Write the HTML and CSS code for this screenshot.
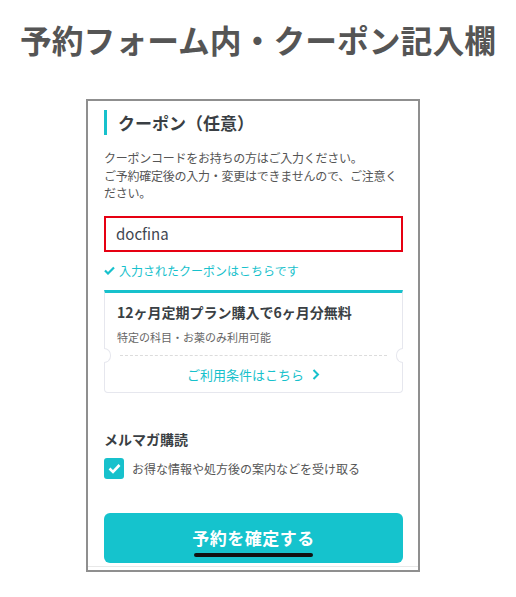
FILE: index.html
```html
<!DOCTYPE html>
<html lang="ja">
<head>
<meta charset="utf-8">
<link rel="stylesheet" href="styles.css">
</head>
<body>
<h1 class="page-title">予約フォーム内・クーポン記入欄</h1>
<div class="frame">
  <div class="section-title">クーポン（任意）</div>
  <p class="desc">クーポンコードをお持ちの方はご入力ください。<br>ご予約確定後の入力・変更はできませんので、ご注意ください。</p>
  <div class="input">docfina</div>
  <div class="applied">
    <svg class="chk" width="11" height="9" viewBox="0 0 11 9"><path d="M1 4.5 L4 7.5 L10 1.5" fill="none" stroke="#17c1cc" stroke-width="2.2"/></svg>
    入力されたクーポンはこちらです
  </div>
  <div class="coupon">
    <div class="coupon-title">12ヶ月定期プラン購入で6ヶ月分無料</div>
    <div class="coupon-sub">特定の科目・お薬のみ利用可能</div>
    <div class="divider"><span class="notch left"></span><span class="notch right"></span></div>
    <div class="coupon-link">ご利用条件はこちら
      <svg width="8" height="11" viewBox="0 0 8 11"><path d="M1.5 1 L6 5.5 L1.5 10" fill="none" stroke="#17c1cc" stroke-width="2"/></svg>
    </div>
  </div>
  <div class="mag-title">メルマガ購読</div>
  <div class="check-row">
    <span class="box"><svg width="13" height="11" viewBox="0 0 13 11"><path d="M1.5 5.5 L5 9 L11.5 2" fill="none" stroke="#fff" stroke-width="2.6"/></svg></span>
    <span class="check-label">お得な情報や処方後の案内などを受け取る</span>
  </div>
  <div class="button">予約を確定する<span class="home-bar"></span></div>
  <div class="bottom-line"></div>
</div>
</body>
</html>
```

FILE: styles.css
```css
* { box-sizing: border-box; }
body {
  margin: 0;
  background: #fff;
  font-family: "Noto Sans CJK JP", "Noto Sans", sans-serif;
}
.page-title {
  margin: 0;
  padding-top: 19px;
  height: 99px;
  font-size: 31.8px;
  line-height: 40px;
  font-weight: 700;
  color: #555;
  text-align: center;
}
.frame {
  width: 334px;
  margin-left: 86px;
  border: 2px solid #8f8f8f;
  padding: 9px 15px 0 16px;
  position: relative;
}
.section-title {
  border-left: 3px solid #17c1cc;
  padding-left: 11px;
  font-size: 17px;
  line-height: 25px;
  font-weight: 700;
  color: #3a3f44;
}
.desc {
  margin: 14px 0 0;
  font-size: 12px;
  line-height: 17.5px;
  letter-spacing: -0.25px;
  color: #555;
}
.input {
  margin-top: 14px;
  height: 36px;
  border: 2px solid #e60012;
  padding-left: 10px;
  font-size: 15px;
  line-height: 32px;
  color: #3f4650;
}
.applied {
  margin-top: 11px;
  font-size: 12px;
  line-height: 16px;
  color: #17c1cc;
  display: flex;
  align-items: center;
  gap: 4px;
}
.coupon {
  margin-top: 11px;
  border: 1px solid #e6e7ee;
  border-top: 3px solid #17c1cc;
  border-radius: 0 0 4px 4px;
  padding: 9px 0 8px;
}
.coupon-title {
  padding-left: 12px;
  font-size: 14px;
  line-height: 20px;
  font-weight: 700;
  color: #3a3f44;
}
.coupon-sub {
  margin-top: 7px;
  padding-left: 12px;
  font-size: 11px;
  line-height: 16px;
  color: #666;
}
.divider {
  position: relative;
  margin: 10px 15px 0;
  border-top: 1px dashed #dcdcdc;
  height: 0;
}
.notch {
  position: absolute;
  top: -8px;
  width: 7px;
  height: 15px;
  background: #fff;
  border: 1px solid #e6e7ee;
}
.notch.left {
  left: -16px;
  border-left: none;
  border-radius: 0 8px 8px 0;
}
.notch.right {
  right: -16px;
  border-right: none;
  border-radius: 8px 0 0 8px;
}
.coupon-link {
  margin-top: 10px;
  font-size: 13px;
  line-height: 18px;
  color: #17c1cc;
  text-align: center;
  display: flex;
  justify-content: center;
  align-items: center;
  gap: 8px;
}
.mag-title {
  margin-top: 36px;
  font-size: 14px;
  line-height: 20px;
  font-weight: 700;
  color: #3a3f44;
}
.check-row {
  margin-top: 9px;
  display: flex;
  align-items: center;
  gap: 8px;
}
.box {
  width: 20px;
  height: 21px;
  background: #17c1cc;
  border-radius: 3px;
  display: flex;
  align-items: center;
  justify-content: center;
}
.check-label {
  font-size: 12px;
  color: #555;
}
.button {
  position: relative;
  margin-top: 34px;
  height: 50px;
  background: #15c3cd;
  border-radius: 6px;
  color: #fff;
  font-size: 17px;
  font-weight: 700;
  text-align: center;
  line-height: 50px;
  letter-spacing: 0.5px;
}
.home-bar {
  position: absolute;
  left: 90px;
  top: 40px;
  width: 119px;
  height: 4px;
  border-radius: 2px;
  background: #111;
}
.bottom-line {
  margin: 3px -15px 0 -16px;
  height: 4px;
  border-top: 1px solid #e8e8e8;
}
```
